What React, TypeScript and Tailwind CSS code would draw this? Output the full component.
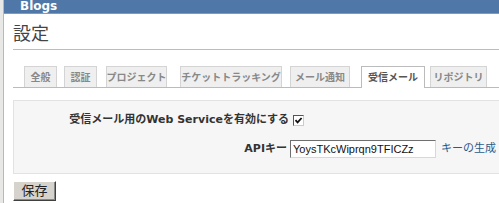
import React from "react";

const tabs = [
  { label: "全般", w: "w-[33px]", ml: "ml-[11px]" },
  { label: "認証", w: "w-[33px]", ml: "ml-[7px]" },
  { label: "プロジェクト", w: "w-[61px]", ml: "ml-[9px]" },
  { label: "チケットトラッキング", w: "w-[102px]", ml: "ml-[13px]" },
  { label: "メール通知", w: "w-[60px]", ml: "ml-[8px]" },
  { label: "受信メール", w: "w-[64px]", ml: "ml-[11px]", selected: true },
  { label: "リポジトリ", w: "w-[57px]", ml: "ml-[5px]" },
];

const font = "font-['DejaVu_Sans','Noto_Sans_CJK_JP',sans-serif]";

export default function App() {
  return (
    <div className={`w-[499px] h-[203px] overflow-hidden bg-[#e8e8e6] pl-[3px] flex ${font}`}>
      <div className="flex-1 flex flex-col bg-white border-l border-[#b8b8b8] min-w-0">
        {/* top bar */}
        <div className="h-[14px] shrink-0 bg-[#4f78a9] border-b border-[#7d9bc2] overflow-hidden pl-[16px]">
          <div className="text-[12px] leading-[12px] font-bold text-white">Blogs</div>
        </div>

        <div className="pl-[9px] flex flex-col">
          <h2 className="mt-[9px] pb-[4px] border-b border-[#bdbdbd] text-[18px] leading-[22px] text-[#444]">
            設定
          </h2>

          {/* tabs */}
          <div className="mt-[16px] flex items-end h-[22px] border-b border-[#bbb]">
            {tabs.map((t) => (
              <div
                key={t.label}
                className={`${t.w} ${t.ml} shrink-0 h-[21px] flex items-center justify-center border border-b-0 text-[10px] font-bold whitespace-nowrap ${
                  t.selected
                    ? "bg-white border-[#bbb] text-[#555] h-[22px] -mb-px"
                    : "bg-[#efefef] border-[#d4d4d4] text-[#888]"
                }`}
              >
                {t.label}
              </div>
            ))}
          </div>

          {/* settings box */}
          <div className="mt-[12px] h-[74px] bg-[#f6f6f6] border border-[#e2e2e2] border-r-0 flex flex-col pt-[10px]">
            <div className="flex items-center h-[18px]">
              <div className="w-[275px] shrink-0 text-right text-[11px] font-bold text-[#333] whitespace-nowrap">
                受信メール用のWeb Serviceを有効にする
              </div>
              <div className="ml-[4px] w-[11px] h-[11px] bg-white border border-t-[#555] border-l-[#555] border-r-[#ccc] border-b-[#ccc] flex items-center justify-center">
                <svg width="9" height="9" viewBox="0 0 9 9">
                  <path d="M1.5 4.2 L3.6 6.4 L7.6 2" stroke="#111" strokeWidth="1.8" fill="none" />
                </svg>
              </div>
            </div>
            <div className="flex items-center mt-[11px] h-[18px]">
              <div className="w-[275px] shrink-0 text-right text-[11px] font-bold text-[#333] pr-[2px]">
                APIキー
              </div>
              <div className="ml-[1px] w-[146px] h-[18px] bg-white border border-t-[#6f6f6f] border-l-[#6f6f6f] border-r-[#d8d8d8] border-b-[#d8d8d8] flex items-center pl-[2px] text-[11px] text-[#111] font-['Liberation_Sans',sans-serif]">
                YoysTKcWiprqn9TFICZz
              </div>
              <a className="ml-[5px] text-[11px] text-[#2a5a8c] whitespace-nowrap">キーの生成</a>
            </div>
          </div>

          {/* save */}
          <div className="mt-[7px]">
            <button className="w-[43px] h-[20px] bg-[#d6d3cc] border border-t-white border-l-white border-r-[#404040] border-b-[#404040] shadow-[inset_-1px_-1px_0_#888] text-[13px] leading-[16px] text-[#222] flex items-center justify-center">
              保存
            </button>
          </div>
        </div>
      </div>
    </div>
  );
}
